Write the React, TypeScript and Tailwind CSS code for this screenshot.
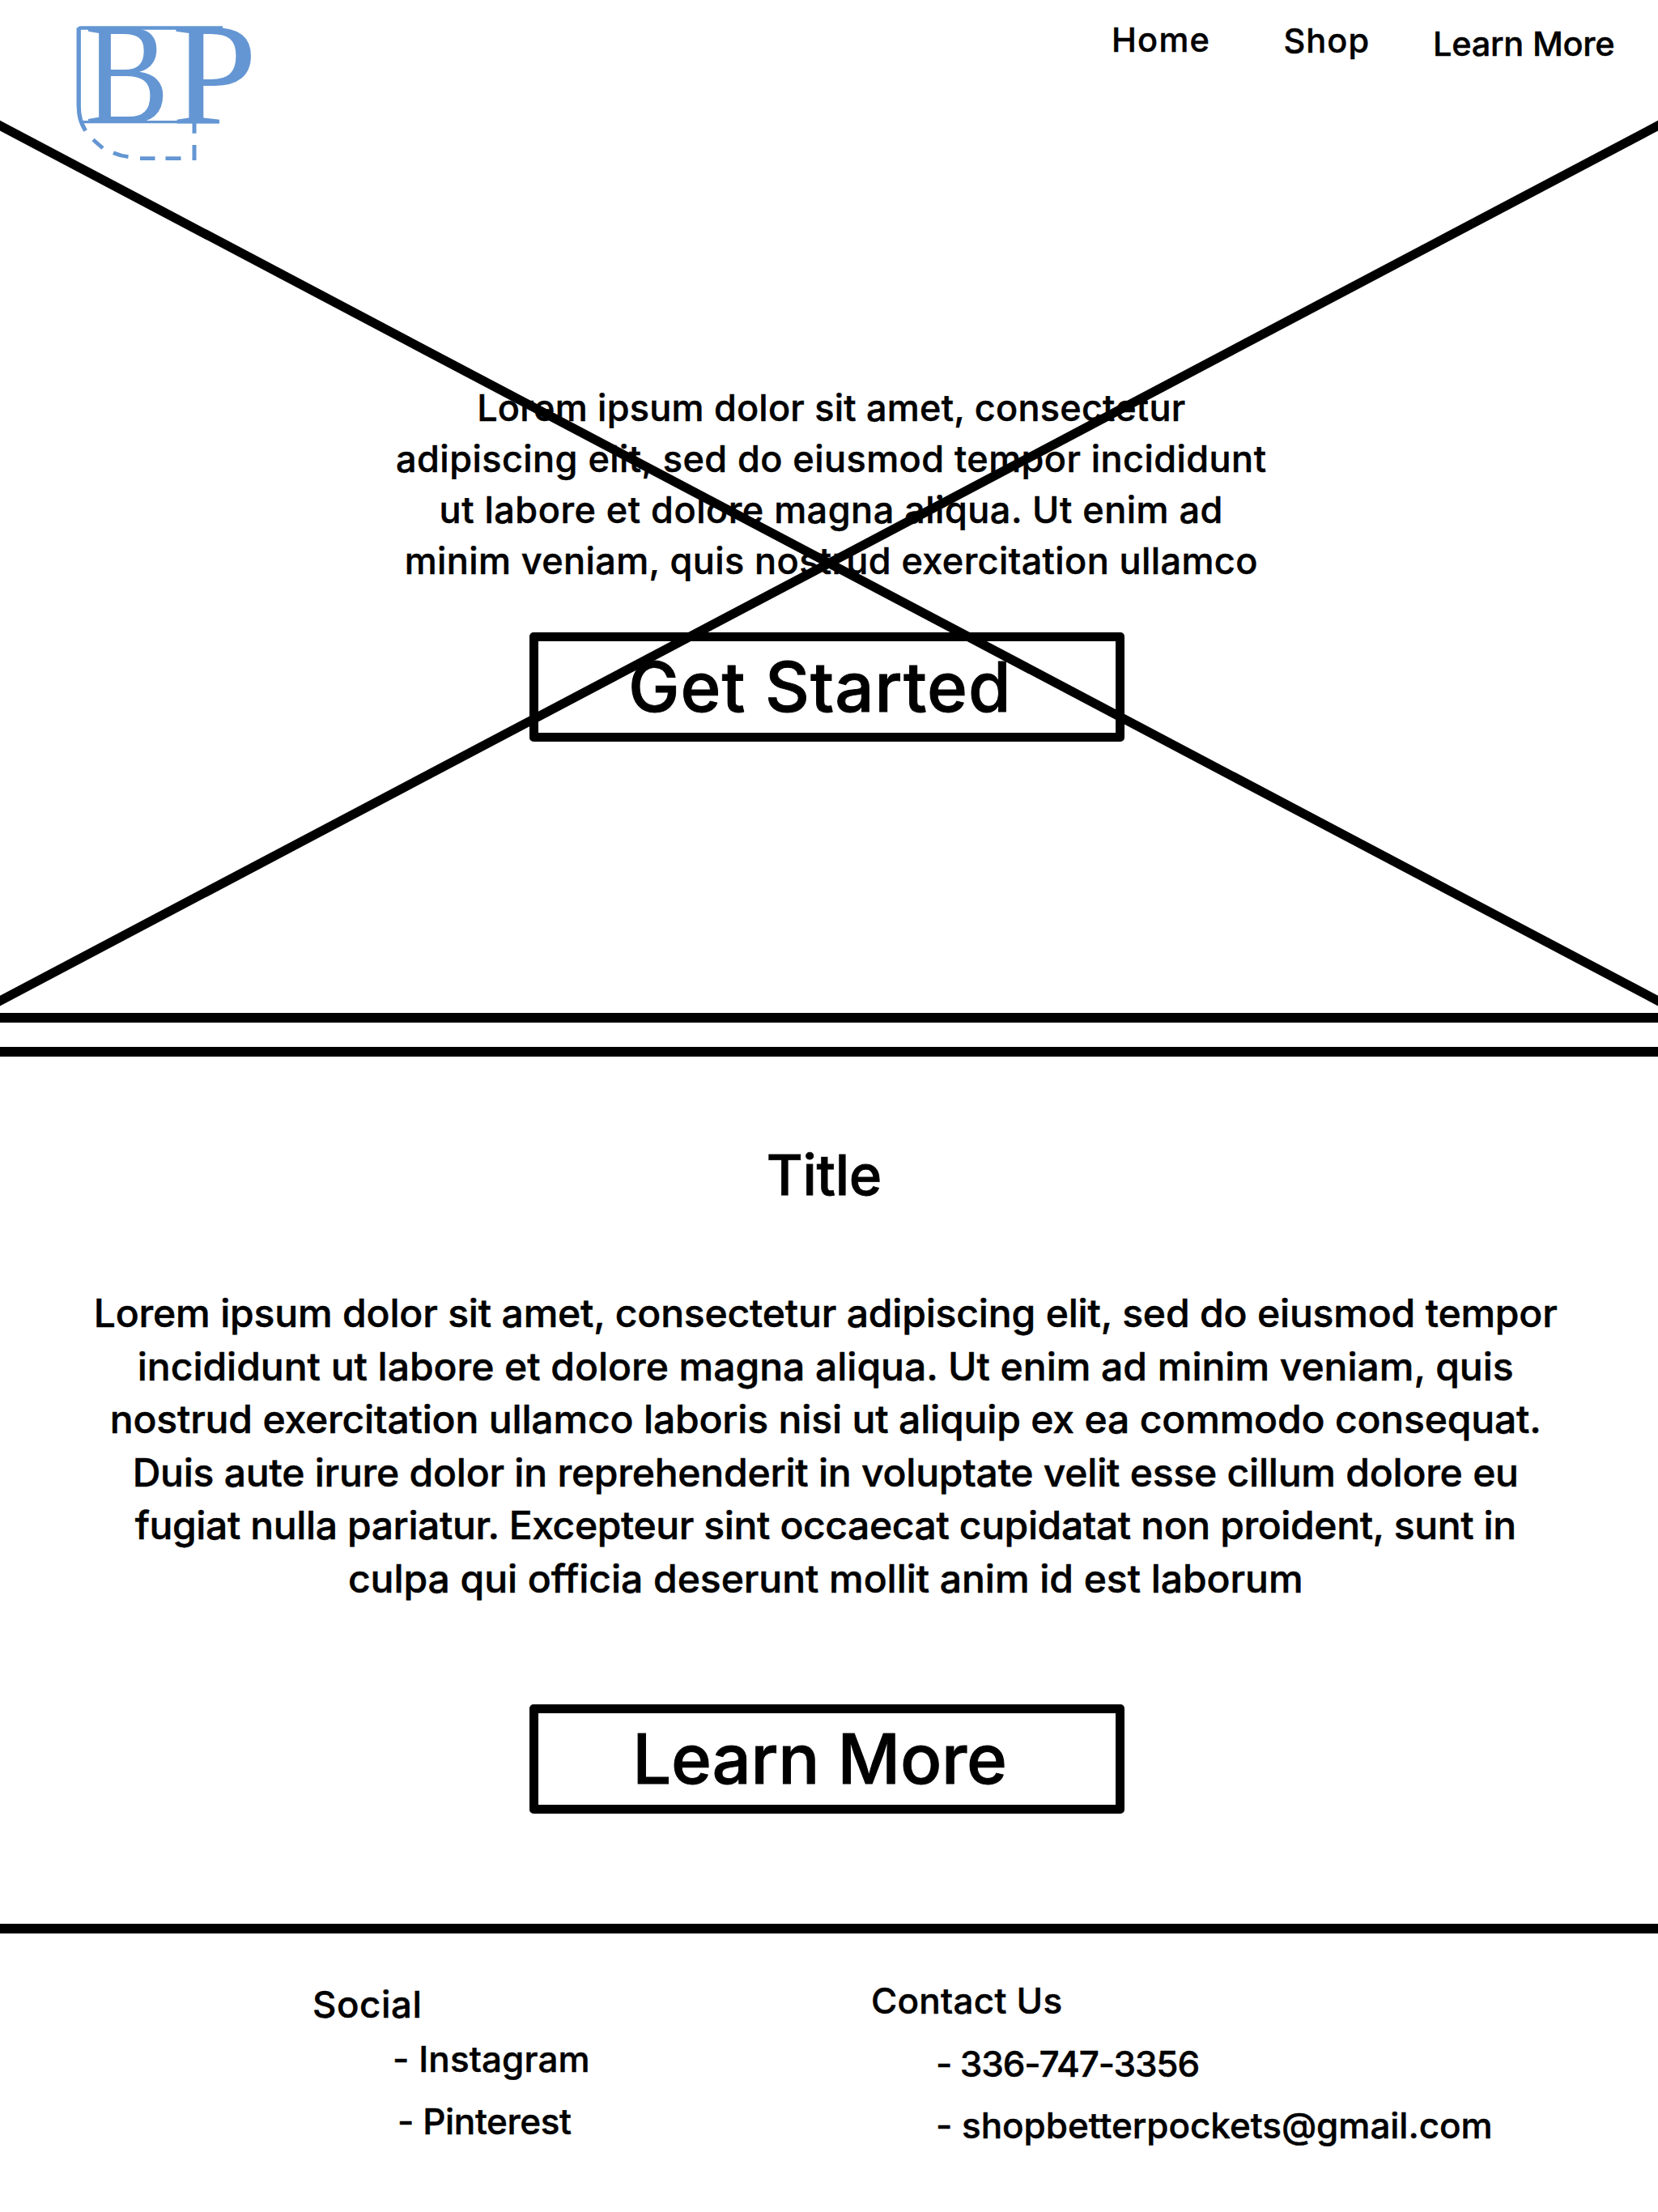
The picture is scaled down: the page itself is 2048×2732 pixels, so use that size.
function Logo() {
  return (
    <svg className="ml-[60px] h-[230px] w-[300px] shrink-0 overflow-visible" viewBox="0 0 300 230" fill="none" stroke="#6496d3">
      <g fill="#6496d3" stroke="none" fontFamily='"Liberation Serif", serif' fontSize="181">
        <text transform="translate(44.6 152.3) scale(.865 1)">B</text>
        <text transform="translate(151.9 152.3) scale(1.048 1)">P</text>
      </g>
      <path d="M37.2 132V37a2.5 2.5 0 0 1 2.5-2.5H215" strokeWidth="4.6" />
      <path d="M37.2 34.500V130C37.200 144 40 152 45.600 161.500" strokeWidth="5.200" />
      <path d="M42 150.600H210.500" strokeWidth="3.400" />
      <path d="M55 172.500L67 183M80 188.700Q89 192.500 98.500 193.700" strokeWidth="4.800" />
      <path d="M113 195.600H131.500M144.500 195.600H163.500" strokeWidth="4.800" />
      <path d="M180 152V164.700M180 179V198" strokeWidth="5" />
    </svg>
  );
}

const heroLines = [
  { text: "Lorem ipsum dolor sit amet, consectetur", tracking: "tracking-[0.23px]" },
  { text: "adipiscing elit, sed do eiusmod tempor incididunt", tracking: "tracking-[0.449px]" },
  { text: "ut labore et dolore magna aliqua. Ut enim ad", tracking: "tracking-[0.504px]" },
  { text: "minim veniam, quis nostrud exercitation ullamco", tracking: "tracking-[0.406px]" },
];

const bodyLines = [
  { text: "Lorem ipsum dolor sit amet, consectetur adipiscing elit, sed do eiusmod tempor", tracking: "tracking-[-0.172px]" },
  { text: "incididunt ut labore et dolore magna aliqua. Ut enim ad minim veniam, quis", tracking: "tracking-[-0.02px]" },
  { text: "nostrud exercitation ullamco laboris nisi ut aliquip ex ea commodo consequat.", tracking: "tracking-[-0.16px]" },
  { text: "Duis aute irure dolor in reprehenderit in voluptate velit esse cillum dolore eu", tracking: "tracking-[-0.219px]" },
  { text: "fugiat nulla pariatur. Excepteur sint occaecat cupidatat non proident, sunt in", tracking: "tracking-[-0.385px]" },
  { text: "culpa qui officia deserunt mollit anim id est laborum", tracking: "tracking-[-0.041px]" },
];

export default function App() {
  return (
    <div className="flex h-[2732px] w-[2048px] flex-col overflow-hidden bg-white font-['Inter',sans-serif] font-medium whitespace-nowrap text-black">
      <section className="relative h-[1251px] shrink-0">
        <svg className="pointer-events-none absolute inset-0 h-full w-full" viewBox="0 0 2048 1251" stroke="#000" strokeWidth="11.3">
          <path d="M-20 144.600L2068 1246.600M-20 1246.600L2068 144.600" />
        </svg>
        <header className="flex h-[230px] items-start">
          <Logo />
          <nav className="ml-[1013px] flex items-start text-[41.5px] leading-[50px] [-webkit-text-stroke:0.011em_black]">
            <a className="mt-6 tracking-[1.22px]">Home</a>
            <a className="mt-[25px] ml-[90.3px] tracking-[1.09px]">Shop</a>
            <a className="mt-[29px] ml-[77.7px] tracking-[-0.246px]">Learn More</a>
          </nav>
        </header>
        <div className="mt-[242px] pl-[5.5px] text-center text-[45px] leading-[63px] [-webkit-text-stroke:0.011em_black]">
          {heroLines.map((l) => (
            <p key={l.text} className={l.tracking}>{l.text}</p>
          ))}
        </div>
        <button className="mt-[57px] ml-[654px] flex h-[135px] w-[735px] items-center rounded-[5px] border-[11px] border-black pl-[111px] text-[85px] leading-[113px] tracking-[1px] [-webkit-text-stroke:0.011em_black]">
          Get Started
        </button>
      </section>
      <div className="h-3 shrink-0 bg-black" />
      <div className="mt-[30px] h-3 shrink-0 bg-black" />
      <section className="flex h-[1071px] shrink-0 flex-col">
        <h1 className="mt-[106px] pr-[12.4px] text-center text-[69px] leading-[80px] tracking-[-0.34px] [-webkit-text-stroke:0.011em_black]">Title</h1>
        <div className="mt-[98px] pr-[8.6px] text-center text-[48px] leading-[65.6px] [-webkit-text-stroke:0.011em_black]">
          {bodyLines.map((l) => (
            <p key={l.text} className={l.tracking}>{l.text}</p>
          ))}
        </div>
        <button className="mt-[122.4px] ml-[654px] flex h-[135px] w-[735px] shrink-0 items-center rounded-[5px] border-[11px] border-black pl-[116.3px] text-[85px] leading-[113px] tracking-[-0.255px] [-webkit-text-stroke:0.011em_black]">
          Learn More
        </button>
      </section>
      <div className="h-3 shrink-0 bg-black" />
      <footer className="flex items-start text-[44px] leading-[50px] [-webkit-text-stroke:0.011em_black]">
        <div className="mt-[63px] ml-[386px] w-[690px]">
          <h2 className="text-[45.5px] tracking-[0.613px]">Social</h2>
          <ul>
            <li className="mt-[17px] ml-[99px] tracking-[0.1px]">- Instagram</li>
            <li className="mt-[27px] ml-[105px] tracking-[-0.397px]">- Pinterest</li>
          </ul>
        </div>
        <div className="mt-[58px]">
          <h2 className="tracking-[0.25px]">Contact Us</h2>
          <ul className="ml-20">
            <li className="mt-7 tracking-[-1.133px]">- 336-747-3356</li>
            <li className="mt-[26px] tracking-[-0.04px]">- shopbetterpockets@gmail.com</li>
          </ul>
        </div>
      </footer>
    </div>
  );
}
